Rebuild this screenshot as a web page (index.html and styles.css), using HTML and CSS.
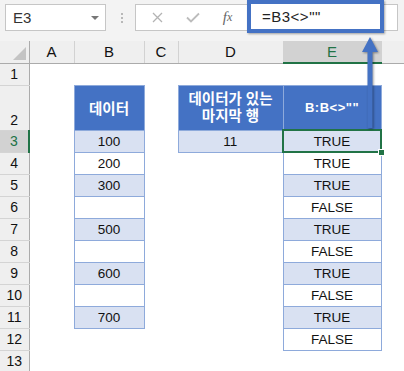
FILE: index.html
```html
<!DOCTYPE html>
<html lang="ko">
<head>
    <meta charset="UTF-8">
    <meta name="viewport" content="width=device-width, initial-scale=1.0">
    <title>B:B&lt;&gt;""</title>
    <link rel="stylesheet" href="styles.css">
</head>
<body>

<div class="app">

    <!-- Formula bar -->
    <div class="formula-bar">
        <div class="name-box">
            <span>E3</span>
            <span class="caret"></span>
        </div>
        <div class="grip"><i></i><i></i><i></i></div>
        <div class="fx-box">
            <span class="btn">
                <svg width="11" height="11" viewBox="0 0 11 11"><path d="M1 1L10 10M10 1L1 10" stroke="#b3b3b3" stroke-width="1.3" fill="none"/></svg>
            </span>
            <span class="btn">
                <svg width="14" height="11" viewBox="0 0 14 11"><path d="M1 5.5L5 9.5L13 1.5" stroke="#bcbcbc" stroke-width="1.8" fill="none"/></svg>
            </span>
            <span class="btn fx">f<span>x</span></span>
            <div class="formula">=B3&lt;&gt;""</div>
        </div>
    </div>

    <!-- Sheet -->
    <table class="sheet">
        <colgroup>
            <col style="width:29px">
            <col style="width:45px">
            <col style="width:70px">
            <col style="width:34px">
            <col style="width:105px">
            <col style="width:98px">
            <col style="width:23px">
        </colgroup>
        <tr class="head-row">
            <th class="corner"><span class="tri"></span></th>
            <th class="ch">A</th>
            <th class="ch">B</th>
            <th class="ch">C</th>
            <th class="ch">D</th>
            <th class="ch sel">E</th>
            <th class="ch"></th>
        </tr>
        <tr>
            <td class="rh">1</td>
            <td></td><td></td><td></td><td></td><td></td><td></td>
        </tr>
        <tr class="tall">
            <td class="rh bottom">2</td>
            <td></td>
            <td class="tb hd ko">데이터</td>
            <td></td>
            <td class="tb hd ko two">데이터가 있는<br>마지막 행</td>
            <td class="tb hd low">B:B&lt;&gt;""</td>
            <td></td>
        </tr>
        <tr>
            <td class="rh sel">3</td>
            <td></td>
            <td class="tb band">100</td>
            <td></td>
            <td class="tb band">11</td>
            <td class="tb band sel-cell">TRUE</td>
            <td></td>
        </tr>
        <tr>
            <td class="rh">4</td>
            <td></td><td class="tb">200</td><td></td><td></td>
            <td class="tb">TRUE</td><td></td>
        </tr>
        <tr>
            <td class="rh">5</td>
            <td></td><td class="tb band">300</td><td></td><td></td>
            <td class="tb band">TRUE</td><td></td>
        </tr>
        <tr>
            <td class="rh">6</td>
            <td></td><td class="tb"></td><td></td><td></td>
            <td class="tb">FALSE</td><td></td>
        </tr>
        <tr>
            <td class="rh">7</td>
            <td></td><td class="tb band">500</td><td></td><td></td>
            <td class="tb band">TRUE</td><td></td>
        </tr>
        <tr>
            <td class="rh">8</td>
            <td></td><td class="tb"></td><td></td><td></td>
            <td class="tb">FALSE</td><td></td>
        </tr>
        <tr>
            <td class="rh">9</td>
            <td></td><td class="tb band">600</td><td></td><td></td>
            <td class="tb band">TRUE</td><td></td>
        </tr>
        <tr>
            <td class="rh">10</td>
            <td></td><td class="tb"></td><td></td><td></td>
            <td class="tb">FALSE</td><td></td>
        </tr>
        <tr>
            <td class="rh">11</td>
            <td></td><td class="tb band">700</td><td></td><td></td>
            <td class="tb band">TRUE</td><td></td>
        </tr>
        <tr>
            <td class="rh">12</td>
            <td></td><td></td><td></td><td></td>
            <td class="tb">FALSE</td><td></td>
        </tr>
        <tr>
            <td class="rh">13</td>
            <td></td><td></td><td></td><td></td><td></td><td></td>
        </tr>
    </table>

    <!-- callout arrow from E2 up to the formula -->
    <svg class="arrow" width="24" height="104" viewBox="0 0 24 104">
        <path d="M12 7L20 22L14.5 22L14.5 98L9.5 98L9.5 22L4 22Z" fill="#4472c4"/>
    </svg>

</div>

</body>
</html>
```

FILE: styles.css
```css
body {
    margin: 0;
    font-family: "Liberation Sans", Arial, sans-serif;
    background: #fff;
}
.app {
    position: relative;
    width: 404px;
    height: 371px;
    overflow: hidden;
}

/* formula bar */
.formula-bar {
    height: 41px;
    box-sizing: border-box;
    padding-top: 4px;
    background: #f3f3f3;
    display: flex;
    align-items: flex-start;
}
.name-box {
    margin-left: 5px;
    width: 101px;
    height: 27px;
    box-sizing: border-box;
    border: 1px solid #c6c6c6;
    background: #fff;
    display: flex;
    align-items: center;
    justify-content: space-between;
    padding: 0 6px 0 7px;
    font-size: 15px;
    color: #333;
}
.caret {
    border-left: 4px solid transparent;
    border-right: 4px solid transparent;
    border-top: 4px solid #777;
}
.grip {
    width: 29px;
    display: flex;
    flex-direction: column;
    align-items: center;
    gap: 2px;
    padding-top: 9px;
    padding-left: 3px;
    box-sizing: border-box;
}
.grip i {
    width: 2px;
    height: 2px;
    background: #b8b8b8;
}
.fx-box {
    width: 263px;
    height: 27px;
    box-sizing: border-box;
    border: 1px solid #c6c6c6;
    background: #fff;
    display: flex;
    align-items: center;
    padding-left: 4px;
}
.btn {
    width: 35px;
    display: flex;
    justify-content: center;
    align-items: center;
}
.fx {
    font-family: "Liberation Serif", "Times New Roman", serif;
    font-style: italic;
    font-size: 15px;
    color: #666;
}
.fx span {
    font-size: 12px;
}
.formula {
    align-self: flex-start;
    margin: -5px 0 0 2px;
    width: 137px;
    height: 33px;
    box-sizing: border-box;
    border: 4px solid #4472c4;
    box-shadow: 1px 1px 2px rgba(0, 0, 0, 0.35);
    padding-left: 11px;
    display: flex;
    align-items: center;
    font-size: 15px;
    letter-spacing: 0.5px;
    color: #222;
    background: #fff;
}

/* sheet */
.sheet {
    border-collapse: collapse;
    table-layout: fixed;
    width: 404px;
}
.sheet tr {
    height: 22px;
}
.sheet tr.tall {
    height: 45px;
}
.sheet td, .sheet th {
    padding: 0;
    text-align: center;
    font-size: 13.5px;
    color: #111;
    white-space: nowrap;
}
.corner {
    position: relative;
    background: #efefef;
    border-right: 1px solid #ababab;
    border-bottom: 1px solid #ababab;
}
.tri {
    position: absolute;
    right: 3px;
    bottom: 3px;
    border-left: 13px solid transparent;
    border-bottom: 13px solid #c4c4c4;
}
.ch {
    background: #efefef;
    font-weight: normal;
    font-size: 15px !important;
    border-right: 1px solid #d2d2d2;
    border-bottom: 1px solid #ababab;
}
.ch.sel {
    background: #d2d2d2;
    color: #217346 !important;
    border-bottom: 2px solid #217346;
}
.rh {
    background: #efefef;
    font-size: 14px !important;
    border-right: 1px solid #ababab;
    border-bottom: 1px solid #d4d4d4;
}
.rh.bottom {
    vertical-align: bottom;
    padding-bottom: 2px;
}
.rh.sel {
    background: #d2d2d2;
    color: #217346 !important;
    border-right: 2px solid #217346;
}

.tb {
    border: 1px solid #8eaadb;
}
.band {
    background: #d9e1f2;
}
.hd {
    background: #4472c4;
    color: #fff !important;
    font-weight: bold;
}
.ko {
    font-family: "Liberation Sans", "Noto Sans CJK KR", sans-serif;
    font-size: 14.5px !important;
}
.two {
    line-height: 17px;
    padding-bottom: 2px;
}
.low {
    vertical-align: middle;
    padding-top: 9px;
    font-size: 13px !important;
    letter-spacing: 0.5px;
}
.sel-cell {
    position: relative;
    border: 2px solid #217346;
}
.sel-cell::after {
    content: "";
    position: absolute;
    right: -5px;
    bottom: -5px;
    width: 5px;
    height: 5px;
    background: #217346;
    border: 1px solid #fff;
}

/* callout */
.arrow {
    position: absolute;
    left: 358px;
    top: 30px;
    filter: drop-shadow(1px 1px 1px rgba(0, 0, 0, 0.4));
}
```
